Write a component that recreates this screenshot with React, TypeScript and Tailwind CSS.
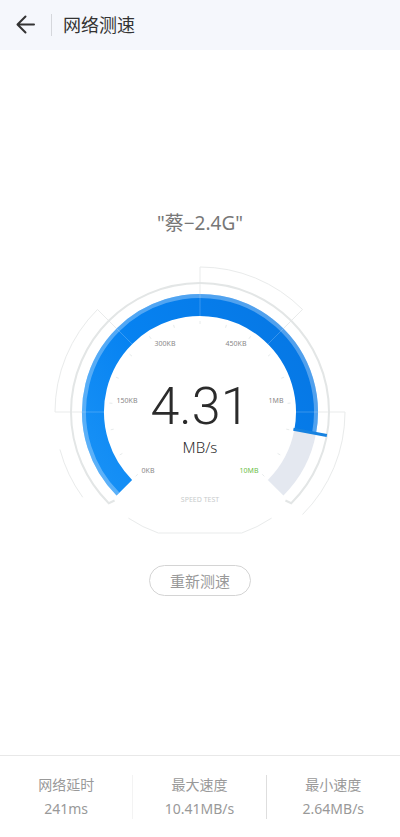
import React from 'react';

const CX = 150;
const CY = 147;

// Angles are in degrees, clockwise from the right-hand side
const point = (r: number, deg: number) => {
  const a = (deg * Math.PI) / 180;
  return `${(CX + r * Math.cos(a)).toFixed(2)} ${(CY + r * Math.sin(a)).toFixed(2)}`;
};

const arc = (r: number, from: number, to: number) =>
  `M ${point(r, from)} A ${r} ${r} 0 ${to - from > 180 ? 1 : 0} 1 ${point(r, to)}`;

const line = (r1: number, r2: number, deg: number) => `M ${point(r1, deg)} L ${point(r2, deg)}`;

const START = 135;
const END = 405;
const NEEDLE = 370.5;

const scaleLabels = [
  { text: '0KB', x: 98, y: 208, color: 'fill-[#8a8a8a]' },
  { text: '150KB', x: 77, y: 138, color: 'fill-[#8a8a8a]' },
  { text: '300KB', x: 115, y: 81, color: 'fill-[#8a8a8a]' },
  { text: '450KB', x: 186, y: 81, color: 'fill-[#8a8a8a]' },
  { text: '1MB', x: 226, y: 138, color: 'fill-[#8a8a8a]' },
  { text: '10MB', x: 199, y: 208, color: 'fill-[#6cc04a]' },
];

const stats = [
  { label: '网络延时', value: '241ms', divider: 'border-r border-[#f3f3f3]' },
  { label: '最大速度', value: '10.41MB/s', divider: 'border-r border-[#dedede]' },
  { label: '最小速度', value: '2.64MB/s', divider: '' },
];

const ticks = Array.from({ length: 17 }, (_, i) => START + (i * 270) / 16);

function Gauge() {
  return (
    <div className="grid mt-7">
      <svg
        viewBox="0 0 300 270"
        fill="none"
        className="col-start-1 row-start-1 w-[300px] h-[270px]"
        aria-hidden="true"
      >
        <defs>
          <linearGradient id="band" x1="32" y1="230" x2="268" y2="90" gradientUnits="userSpaceOnUse">
            <stop offset="0" stopColor="#1b94f7" />
            <stop offset="0.45" stopColor="#0682f1" />
            <stop offset="1" stopColor="#0677e4" />
          </linearGradient>
        </defs>

        {/* Outer frame segments */}
        <g stroke="#e9ebeb" strokeWidth="1">
          <path d={arc(145, 180, 225)} />
          <path d={arc(145, 270, 315)} />
          <path d={arc(145, 360, 405)} />
          <path d={arc(145, 144, 165)} />
          <path d={arc(128, 109, 124)} />
          <path d={arc(128, 56, 71)} />
          <path d={`M ${point(128, 109)} L ${point(128, 71)}`} />
          <path d={line(118, 145, 180)} />
          <path d={line(118, 145, 225)} />
          <path d={line(118, 145, 270)} />
          <path d={line(118, 145, 315)} />
          <path d={line(118, 145, 360)} />
        </g>

        {/* Ring round the band */}
        <path
          d={`M ${point(123, START - 1)} L ${arc(129, START, END).slice(2)} L ${point(123, END + 1)}`}
          stroke="#e3e6e6"
          strokeWidth="2"
        />

        {/* Band */}
        <path d={arc(107, NEEDLE, END)} stroke="#e4e8f0" strokeWidth="22" />
        <path d={arc(107, START, NEEDLE)} stroke="url(#band)" strokeWidth="22" />
        <path d={arc(116, START, NEEDLE)} stroke="#fff" strokeOpacity="0.3" strokeWidth="4" />

        <g stroke="#fff" strokeOpacity="0.2" strokeWidth="1">
          {[180, 225, 270, 315, 360].map(deg => (
            <path key={deg} d={line(96, 118, deg)} />
          ))}
        </g>

        <g stroke="#e8ecec" strokeWidth="1">
          {ticks.map(deg => (
            <path key={deg} d={line(88, 91, deg)} />
          ))}
        </g>

        <path d={line(95, 129, NEEDLE)} stroke="#1782e0" strokeWidth="3" />

        <g className="text-[7px]" textAnchor="middle">
          {scaleLabels.map(label => (
            <text key={label.text} x={label.x} y={label.y} className={label.color}>
              {label.text}
            </text>
          ))}
          <text x="150" y="237" className="fill-[#c8cccc]">
            SPEED TEST
          </text>
        </g>
      </svg>

      <div className="col-start-1 row-start-1 flex flex-col items-center pt-[112px] text-[#2b2b2b]">
        <span className="text-[52px] leading-[60px] font-light font-['Roboto',sans-serif]">4.31</span>
        <span className="text-[15px] leading-5 font-light">MB/s</span>
      </div>
    </div>
  );
}

export default function App() {
  return (
    <div className="min-h-screen flex flex-col bg-white font-['Noto_Sans','Noto_Sans_CJK_SC',sans-serif]">
      <header className="h-[50px] flex items-center bg-[#f5f7fc] px-4">
        <button type="button" aria-label="返回" className="text-[#333]">
          <svg viewBox="0 0 20 20" fill="none" stroke="currentColor" strokeWidth="2" strokeLinecap="round" strokeLinejoin="round" className="w-5 h-5">
            <path d="M18 9.5H2M9.5 1.5l-8 8 8 8" />
          </svg>
        </button>
        <span className="w-px h-[22px] ml-[15px] bg-[#d5d7dc]" />
        <h1 className="ml-[11px] text-[18px] leading-6 text-[#333]">网络测速</h1>
      </header>

      <main className="flex-1 flex flex-col items-center justify-center">
        <p className="text-[19px] leading-7 text-[#777]">"蔡−2.4G"</p>
        <Gauge />
        <button
          type="button"
          className="mt-[30px] h-[31px] px-5 rounded-full border border-[#d4d4d4] text-[15px] leading-5 text-[#999]"
        >
          重新测速
        </button>
      </main>

      <footer className="border-t border-[#e8e8e8] pt-[19px] pb-[18px]">
        <dl className="grid grid-cols-3 text-center text-[14px] leading-5 text-[#999]">
          {stats.map(stat => (
            <div key={stat.label} className={`flex flex-col gap-1 ${stat.divider}`}>
              <dt>{stat.label}</dt>
              <dd>{stat.value}</dd>
            </div>
          ))}
        </dl>
      </footer>
    </div>
  );
}
